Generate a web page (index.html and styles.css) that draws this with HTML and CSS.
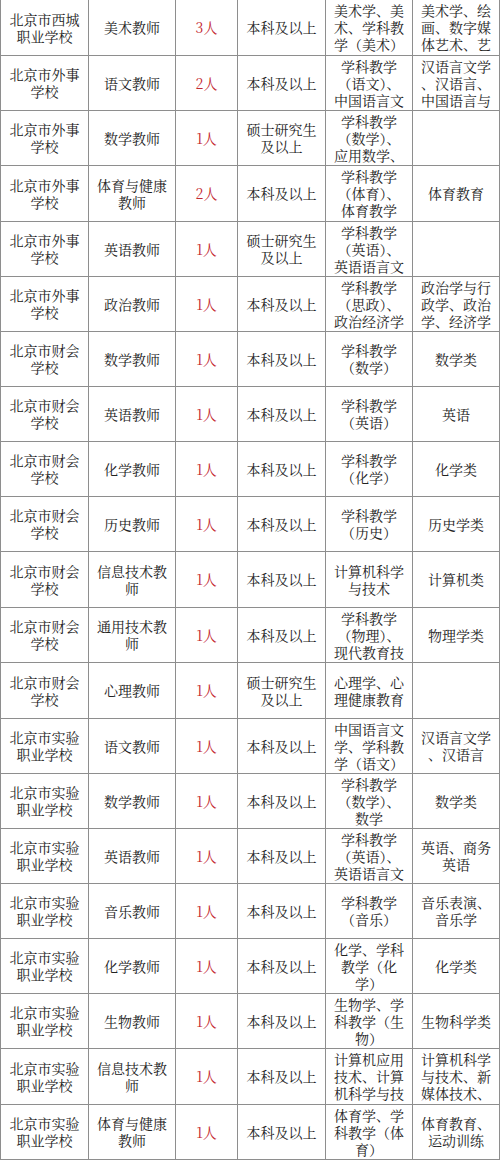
FILE: index.html
```html
<!DOCTYPE html>
<html lang="zh-CN">
<head>
<meta charset="utf-8">
<title>招聘岗位表</title>
<link rel="stylesheet" href="styles.css">
</head>
<body>
<div class="table">
  <div class="c">北京市西城<br>职业学校</div><div class="c">美术教师</div><div class="c n">3人</div><div class="c">本科及以上</div><div class="c">美术学、美<br>术、学科教<br>学（美术）</div><div class="c">美术学、绘<br>画、数字媒<br>体艺术、艺</div>

  <div class="c">北京市外事<br>学校</div><div class="c">语文教师</div><div class="c n">2人</div><div class="c">本科及以上</div><div class="c">学科教学<br>（语文）、<br>中国语言文</div><div class="c">汉语言文学<br>、汉语言、<br>中国语言与</div>

  <div class="c">北京市外事<br>学校</div><div class="c">数学教师</div><div class="c n">1人</div><div class="c">硕士研究生<br>及以上</div><div class="c">学科教学<br>（数学）、<br>应用数学、</div><div class="c"></div>

  <div class="c">北京市外事<br>学校</div><div class="c">体育与健康<br>教师</div><div class="c n">2人</div><div class="c">本科及以上</div><div class="c">学科教学<br>（体育）、<br>体育教学</div><div class="c">体育教育</div>

  <div class="c">北京市外事<br>学校</div><div class="c">英语教师</div><div class="c n">1人</div><div class="c">硕士研究生<br>及以上</div><div class="c">学科教学<br>（英语）、<br>英语语言文</div><div class="c"></div>

  <div class="c">北京市外事<br>学校</div><div class="c">政治教师</div><div class="c n">1人</div><div class="c">本科及以上</div><div class="c">学科教学<br>（思政）、<br>政治经济学</div><div class="c">政治学与行<br>政学、政治<br>学、经济学</div>

  <div class="c">北京市财会<br>学校</div><div class="c">数学教师</div><div class="c n">1人</div><div class="c">本科及以上</div><div class="c">学科教学<br>（数学）</div><div class="c">数学类</div>

  <div class="c">北京市财会<br>学校</div><div class="c">英语教师</div><div class="c n">1人</div><div class="c">本科及以上</div><div class="c">学科教学<br>（英语）</div><div class="c">英语</div>

  <div class="c">北京市财会<br>学校</div><div class="c">化学教师</div><div class="c n">1人</div><div class="c">本科及以上</div><div class="c">学科教学<br>（化学）</div><div class="c">化学类</div>

  <div class="c">北京市财会<br>学校</div><div class="c">历史教师</div><div class="c n">1人</div><div class="c">本科及以上</div><div class="c">学科教学<br>（历史）</div><div class="c">历史学类</div>

  <div class="c">北京市财会<br>学校</div><div class="c">信息技术教<br>师</div><div class="c n">1人</div><div class="c">本科及以上</div><div class="c">计算机科学<br>与技术</div><div class="c">计算机类</div>

  <div class="c">北京市财会<br>学校</div><div class="c">通用技术教<br>师</div><div class="c n">1人</div><div class="c">本科及以上</div><div class="c">学科教学<br>（物理）、<br>现代教育技</div><div class="c">物理学类</div>

  <div class="c">北京市财会<br>学校</div><div class="c">心理教师</div><div class="c n">1人</div><div class="c">硕士研究生<br>及以上</div><div class="c">心理学、心<br>理健康教育</div><div class="c"></div>

  <div class="c">北京市实验<br>职业学校</div><div class="c">语文教师</div><div class="c n">1人</div><div class="c">本科及以上</div><div class="c">中国语言文<br>学、学科教<br>学（语文）</div><div class="c">汉语言文学<br>、汉语言</div>

  <div class="c">北京市实验<br>职业学校</div><div class="c">数学教师</div><div class="c n">1人</div><div class="c">本科及以上</div><div class="c">学科教学<br>（数学）、<br>数学</div><div class="c">数学类</div>

  <div class="c">北京市实验<br>职业学校</div><div class="c">英语教师</div><div class="c n">1人</div><div class="c">本科及以上</div><div class="c">学科教学<br>（英语）、<br>英语语言文</div><div class="c">英语、商务<br>英语</div>

  <div class="c">北京市实验<br>职业学校</div><div class="c">音乐教师</div><div class="c n">1人</div><div class="c">本科及以上</div><div class="c">学科教学<br>（音乐）</div><div class="c">音乐表演、<br>音乐学</div>

  <div class="c">北京市实验<br>职业学校</div><div class="c">化学教师</div><div class="c n">1人</div><div class="c">本科及以上</div><div class="c">化学、学科<br>教学（化<br>学）</div><div class="c">化学类</div>

  <div class="c">北京市实验<br>职业学校</div><div class="c">生物教师</div><div class="c n">1人</div><div class="c">本科及以上</div><div class="c">生物学、学<br>科教学（生<br>物）</div><div class="c">生物科学类</div>

  <div class="c">北京市实验<br>职业学校</div><div class="c">信息技术教<br>师</div><div class="c n">1人</div><div class="c">本科及以上</div><div class="c">计算机应用<br>技术、计算<br>机科学与技</div><div class="c">计算机科学<br>与技术、新<br>媒体技术、</div>

  <div class="c">北京市实验<br>职业学校</div><div class="c">体育与健康<br>教师</div><div class="c n">1人</div><div class="c">本科及以上</div><div class="c">体育学、学<br>科教学（体<br>育）</div><div class="c">体育教育、<br>运动训练</div>
</div>
</body>
</html>
```
FILE: styles.css
```css
html, body {
  margin: 0;
  padding: 0;
  background: #ffffff;
}

.table {
  display: grid;
  width: 500px;
  box-sizing: border-box;
  grid-template-columns: 87px 86px 61px 87px 86px 86px;
  grid-template-rows: 55px 54px 54px 55px 54px 54px 54px 54px 54px 54px 55px 54px 55px 54px 54px 54px 54px 54px 54px 55px 54px;
  gap: 1px;
  padding: 0 1px 1px 1px;
  background: #8e8e8e;
  font-family: "Noto Serif CJK SC", "Liberation Serif", "Noto Sans CJK SC", serif;
  font-size: 14px;
  line-height: 17px;
  color: #222222;
}

.c {
  background: #ffffff;
  display: flex;
  align-items: center;
  justify-content: center;
  text-align: center;
  overflow: hidden;
  white-space: nowrap;
}

.n {
  color: #c4272f;
}
```
